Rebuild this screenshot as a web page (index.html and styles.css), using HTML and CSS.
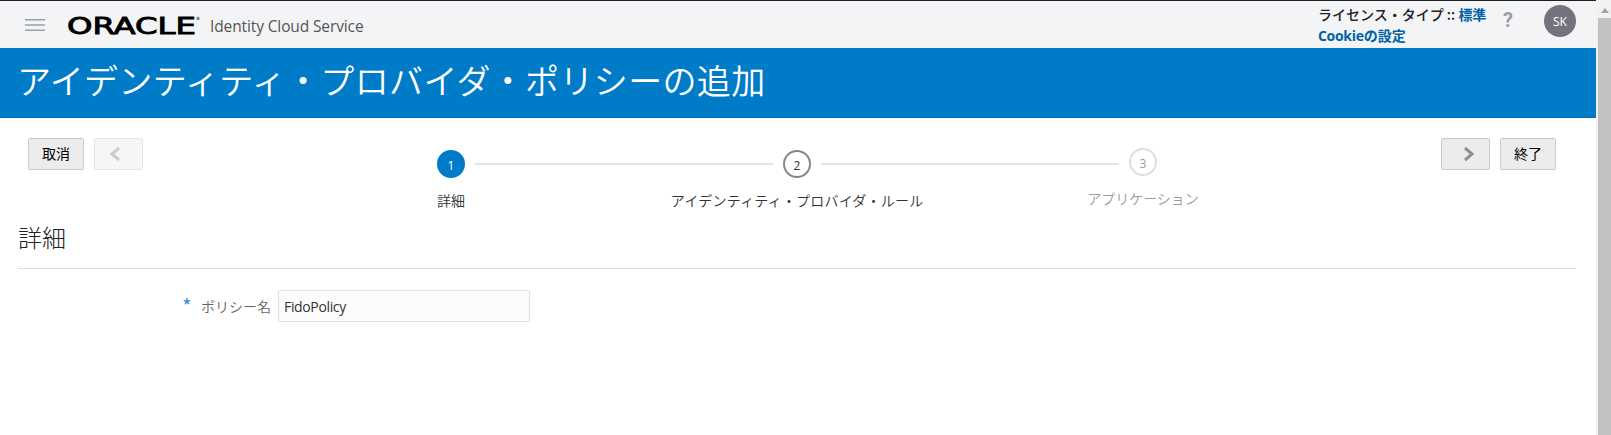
FILE: index.html
```html
<!DOCTYPE html>
<html lang="ja">
<head>
<meta charset="utf-8">
<title>Identity Cloud Service</title>
<link rel="stylesheet" href="styles.css">
</head>
<body>
<div class="page">
  <header class="topbar">
    <svg class="menu" width="20" height="12" viewBox="0 0 20 12"><path d="M0 .75h20M0 6h20M0 11.25h20" stroke="#9a9fa3" stroke-width="1.5"/></svg>
    <svg class="logo" width="134" height="24" viewBox="0 0 134 24"><text class="wordmark" x="-1" y="20.500" textLength="129" lengthAdjust="spacingAndGlyphs">ORACLE</text><circle cx="130" cy="5.500" r="1.300" fill="#999" stroke="#777" stroke-width="1"/></svg>
    <span class="product">Identity Cloud Service</span>
    <div class="license">
      <div class="license-row">ライセンス・タイプ :: <a class="link">標準</a></div>
      <div class="license-row"><a class="link"><span class="latin">Cookie</span>の設定</a></div>
    </div>
    <span class="help">?</span>
    <span class="avatar">SK</span>
  </header>
  <div class="banner"><h1 class="title">アイデンティティ・プロバイダ・ポリシーの追加</h1></div>
  <main class="content">
    <div class="wizard">
      <div class="buttons">
        <button class="btn btn-text">取消</button>
        <button class="btn btn-arrow disabled"><svg class="prev" width="12" height="16" viewBox="0 0 12 16"><path d="M10 2 3 8l7 6" fill="none" stroke="#8c9094" stroke-width="3"/></svg></button>
      </div>
      <div class="train">
        <div class="step current"><span class="dot">1</span><span class="label">詳細</span></div>
        <span class="line"></span>
        <div class="step"><span class="dot">2</span><span class="label wide">アイデンティティ・プロバイダ・ルール</span></div>
        <span class="line"></span>
        <div class="step pending"><span class="dot">3</span><span class="label">アプリケーション</span></div>
      </div>
      <div class="buttons">
        <button class="btn btn-arrow"><svg class="next" width="12" height="16" viewBox="0 0 12 16"><path d="m2 2 7 6-7 6" fill="none" stroke="#8c9094" stroke-width="3"/></svg></button>
        <button class="btn btn-text">終了</button>
      </div>
    </div>
    <h2 class="heading">詳細</h2>
    <div class="field">
      <span class="required">*</span>
      <label class="field-label" for="policy">ポリシー名</label>
      <input class="input" id="policy" value="FidoPolicy">
    </div>
  </main>
</div>
<div class="scrollbar">
  <svg class="scroll-up" width="8" height="5" viewBox="0 0 8 5"><path d="M0 5 4 0l4 5z" fill="#a3a3a3"/></svg>
  <div class="thumb"></div>
</div>
</body>
</html>
```

FILE: styles.css
```css
* { box-sizing: border-box; }
body {
  margin: 0;
  height: 435px;
  display: flex;
  overflow: hidden;
  background: #fff;
  color: #333;
  font-family: "Open Sans", "Noto Sans CJK JP", sans-serif;
  font-size: 14px;
}
.page { width: 1596px; flex: none; }
.topbar {
  height: 48px;
  border-top: 1px solid #201e26;
  background: #f3f4f6;
  display: flex;
  align-items: flex-start;
  padding-left: 25px;
}
.menu { margin-top: 18px; }
.logo { margin: 12px 0 0 23px; }
.wordmark { font: 22.500px "DejaVu Sans", sans-serif; fill: #000; stroke: #000; stroke-width: 0.9px; }
.product {
  margin: 14px 0 0 8px;
  width: 155px;
  font-size: 15.500px;
  line-height: 22px;
  letter-spacing: -0.120px;
  white-space: nowrap;
  color: #555;
}
.license {
  margin: 3px 0 0 953px;
  width: 185px;
  font-family: "Noto Sans CJK JP", sans-serif;
  font-size: 14px;
  font-weight: 500;
  color: #222;
  white-space: nowrap;
}
.license-row { height: 21px; line-height: 21px; }
.link { color: #0061a5; font-weight: 700; }
.latin { font-family: "Open Sans", sans-serif; letter-spacing: -0.300px; }
.help {
  width: 12px;
  margin-top: 7px;
  font: bold 20px/25px Roboto, sans-serif;
  color: #9a9c9f;
}
.avatar {
  margin: 4px 0 0 29px;
  width: 32px;
  height: 32px;
  border-radius: 50%;
  background: #73737f;
  color: #fff;
  font-size: 12px;
  line-height: 33px;
  text-align: center;
}
.banner {
  height: 70px;
  background: #007bc8;
  border-bottom: 1px solid #006db3;
  padding-left: 17px;
}
.title {
  margin: 0;
  font: 350 34px/63px "Noto Sans CJK JP", sans-serif;
  letter-spacing: 0.350px;
  color: #fff;
  white-space: nowrap;
}
.content { padding: 20px 20px 0 18px; }
.wizard { display: flex; justify-content: space-between; padding: 0 20px 0 10px; height: 83px; }
.buttons { display: flex; gap: 10px; height: 32px; }
.btn {
  height: 32px;
  padding: 0;
  border: 1px solid #c9cacb;
  border-radius: 2px;
  background: #ececec;
  color: #000;
  font: 14px/28px "Noto Sans CJK JP", sans-serif;
}
.btn-text { width: 56px; padding-bottom: 3px; }
.btn-arrow { width: 49px; display: flex; align-items: center; }
.prev { margin-left: 14px; }
.next { margin-left: 21px; }
.disabled { opacity: 0.45; }
.train { display: flex; align-items: flex-start; width: 720px; padding-top: 12px; margin-left: 10px; }
.step { width: 28px; display: flex; flex-direction: column; align-items: center; }
.dot {
  width: 28px;
  height: 28px;
  border: 2px solid #85898c;
  border-radius: 50%;
  text-align: center;
  font-size: 12px;
  line-height: 27px;
}
.current .dot { background: #007bc8; border-color: #007bc8; color: #fff; }
.pending { margin-top: -2px; color: #9c9c9c; }
.pending .dot { border-color: #dfdfdf; }
.label { margin-top: 12px; font: 350 14px/20px "Noto Sans CJK JP", sans-serif; white-space: nowrap; }
.wide { letter-spacing: 0.200px; }
.line { flex: 1; height: 2px; margin: 13px 10px 0; background: #e4e4e4; }
.heading {
  margin: 0;
  height: 48px;
  border-bottom: 1px solid #d6dfe6;
  font: 300 24px/31px "Noto Sans CJK JP", sans-serif;
  color: #222;
}
.field { display: flex; padding: 21px 0 0 165px; }
.required { width: 18px; color: #0572ce; line-height: 28px; }
.field-label { width: 77px; font: 350 14px/32px "Noto Sans CJK JP", sans-serif; color: #666; }
.input {
  width: 252px;
  height: 32px;
  border: 1px solid #dfe1e3;
  border-radius: 2px;
  background: #fcfcfc;
  padding: 1px 5px 0;
  font: 14px "Open Sans", sans-serif;
  letter-spacing: -0.350px;
  color: #333;
}
.scrollbar { flex: 1; background: #f1f1f1; padding: 8px 0 0 2px; }
.scroll-up { display: block; margin-left: 3px; }
.thumb { margin-top: 5px; height: 417px; background: #c1c1c1; }
```
